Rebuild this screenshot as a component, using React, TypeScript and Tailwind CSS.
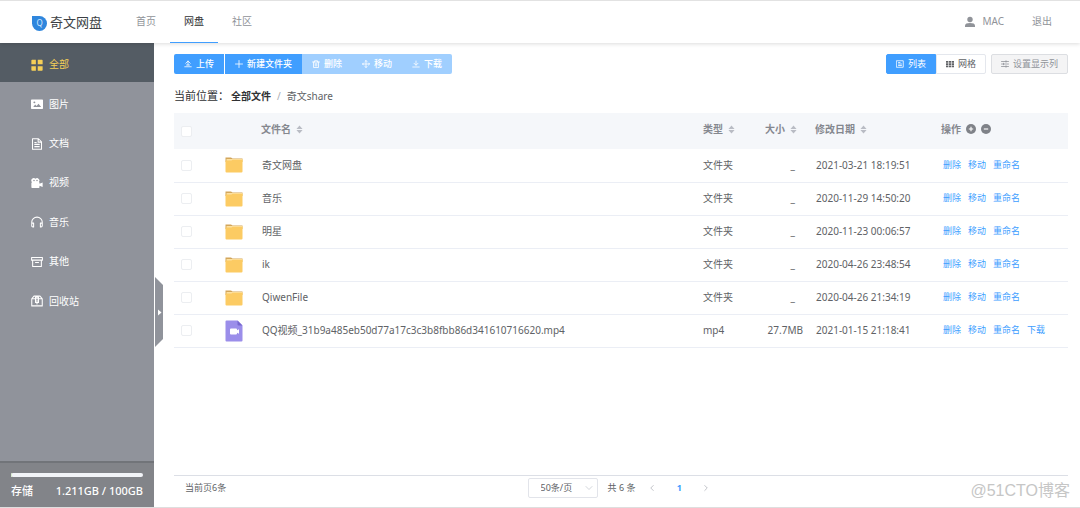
import { useState } from 'react';
import type { ReactNode } from 'react';
import clsx from 'clsx';

type FileRow = {
  name: string;
  kind: 'folder' | 'video';
  type: string;
  size: string;
  date: string;
};

const files: FileRow[] = [
  { name: '奇文网盘', kind: 'folder', type: '文件夹', size: '_', date: '2021-03-21 18:19:51' },
  { name: '音乐', kind: 'folder', type: '文件夹', size: '_', date: '2020-11-29 14:50:20' },
  { name: '明星', kind: 'folder', type: '文件夹', size: '_', date: '2020-11-23 00:06:57' },
  { name: 'ik', kind: 'folder', type: '文件夹', size: '_', date: '2020-04-26 23:48:54' },
  { name: 'QiwenFile', kind: 'folder', type: '文件夹', size: '_', date: '2020-04-26 21:34:19' },
  {
    name: 'QQ视频_31b9a485eb50d77a17c3c3b8fbb86d341610716620.mp4',
    kind: 'video',
    type: 'mp4',
    size: '27.7MB',
    date: '2021-01-15 21:18:41',
  },
];

/* Line icon on a 16 unit grid */
function Line({ className, width = 1.4, children }: { className: string; width?: number; children: ReactNode }) {
  return (
    <svg
      viewBox="0 0 16 16"
      className={clsx('shrink-0', className)}
      fill="none"
      stroke="currentColor"
      strokeWidth={width}
      strokeLinecap="round"
      strokeLinejoin="round"
      aria-hidden="true"
    >
      {children}
    </svg>
  );
}

const menu = [
  {
    label: '全部',
    icon: (
      <Line className="size-3" width={0}>
        <path
          fill="currentColor"
          d="M1.5 1h5v6h-6V2a1 1 0 0 1 1-1zM9 1h5.500a1 1 0 0 1 1 1v5H9zM.5 9.500h6v6h-5a1 1 0 0 1-1-1zM9 9.500h6.500v5a1 1 0 0 1-1 1H9z"
        />
      </Line>
    ),
  },
  {
    label: '图片',
    icon: (
      <Line className="size-3" width={0}>
        <path
          fill="currentColor"
          fillRule="evenodd"
          d="M1 2h14a1 1 0 0 1 1 1v10.500a1 1 0 0 1-1 1H1a1 1 0 0 1-1-1V3a1 1 0 0 1 1-1zM3 12h10.500l-3.500-4.500-2.500 3L5.500 8.500zM4.500 4.500a1.300 1.300 0 1 0 0 2.600 1.300 1.300 0 0 0 0-2.600z"
        />
      </Line>
    ),
  },
  {
    label: '文档',
    icon: (
      <Line className="size-3">
        <path d="M2 1h8l4 4v10H2zM9.500 1v4.500H14M5 6h2M5 8.500h6M5 11.500h6" />
      </Line>
    ),
  },
  {
    label: '视频',
    icon: (
      <Line className="size-3" width={0}>
        <path
          fill="currentColor"
          fillRule="evenodd"
          d="M.5 8a1 1 0 0 1 1-1A3 3 0 0 1 6 2.300 3.200 3.200 0 0 1 10.500 6.800c.5.100.8.500.8 1.200v1l4.200-1.800v6.100l-4.200-1.500v1.700a1 1 0 0 1-1 1H1.500a1 1 0 0 1-1-1zM4 3.800a1 1 0 1 0 0 2 1 1 0 0 0 0-2zM8 3.800a1 1 0 1 0 0 2 1 1 0 0 0 0-2z"
        />
      </Line>
    ),
  },
  {
    label: '音乐',
    icon: (
      <Line className="size-3">
        <path d="M1 11V8a7 6.500 0 0 1 14 0v3M1 9.500h2.500v5H2.500A1.500 1.500 0 0 1 1 13zM15 9.500h-2.500v5h1A1.500 1.500 0 0 0 15 13z" />
      </Line>
    ),
  },
  {
    label: '其他',
    icon: (
      <Line className="size-3">
        <path d="M.8 2h14.400v3.500H.8zM2.200 5.500h11.600V14H2.200zM6 8.700h4" />
      </Line>
    ),
  },
  {
    label: '回收站',
    icon: (
      <Line className="size-3">
        <path d="M1 5h14v9.500H1zM1 5l3-3.500h8L15 5M6 5V3h4v2M6 5v5h4V5M8 7v5" />
      </Line>
    ),
  },
];

const uploadIcon = (
  <Line className="size-2" width={1.6}>
    <path d="M8 10V2M3.500 6.500 8 2l4.500 4.500M1.500 13.500h13M5 10h6" />
  </Line>
);
const plusIcon = (
  <Line className="size-2" width={1.6}>
    <path d="M8 1v14M1 8h14" />
  </Line>
);
const trashIcon = (
  <Line className="size-2" width={1.6}>
    <path d="M1 4h14M5 4V1.500h6V4M3 4v11h10V4M6.500 7v5M9.500 7v5" />
  </Line>
);
const moveIcon = (
  <Line className="size-2" width={1.6}>
    <path d="M8 1v14M1 8h14M6 3l2-2 2 2M6 13l2 2 2-2M3 6 1 8l2 2M13 6l2 2-2 2" />
  </Line>
);
const downloadIcon = (
  <Line className="size-2" width={1.6}>
    <path d="M8 2v8M4 6.500 8 10.500l4-4M1.500 14h13" />
  </Line>
);

function ToolButton({ label, icon, disabled, className }: { label: string; icon: ReactNode; disabled?: boolean; className?: string }) {
  return (
    <button
      type="button"
      disabled={disabled}
      className={clsx(
        'flex h-5 items-center gap-1 px-[10px] text-[9px] font-medium text-white',
        disabled ? 'bg-[#a0cfff]' : 'bg-[#409eff]',
        className
      )}
    >
      {icon}
      {label}
    </button>
  );
}

function SortHeader({ label }: { label: string }) {
  return (
    <button type="button" className="flex items-center gap-[5px] font-bold">
      {label}
      <svg viewBox="0 0 8 10" className="h-[9px] w-[7px] text-[#b9bcc4]" fill="currentColor" aria-hidden="true">
        <path d="M4 .5 7.500 4.300h-7zM4 9.500.5 5.700h7z" />
      </svg>
    </button>
  );
}

function FileIcon({ kind }: { kind: FileRow['kind'] }) {
  if (kind === 'folder') {
    return (
      <svg viewBox="0 0 18 16" className="h-4 w-[18px]" aria-hidden="true">
        <path fill="#d3a65a" d="M.5.500h5.500l1.500 1h10V5H.5z" />
        <path fill="#fde0a0" d="M1.500 2h16v3h-16z" />
        <path fill="#fccb63" d="M.5 3.500h6l1-.8h10v11.800a1 1 0 0 1-1 1h-15a1 1 0 0 1-1-1z" />
      </svg>
    );
  }
  return (
    <svg viewBox="0 0 18 22" className="h-[22px] w-[18px]" aria-hidden="true">
      <path fill="#9b8eea" d="M1.500.5h11l5 5v15a1 1 0 0 1-1 1h-15a1 1 0 0 1-1-1v-19a1 1 0 0 1 1-1z" />
      <path fill="#7767cf" d="M12.500.5l5 5h-4a1 1 0 0 1-1-1z" />
      <path fill="#fff" d="M6 8.500h5a1 1 0 0 1 1 1v.7l2-1v4.600l-2-1v.7a1 1 0 0 1-1 1H6a1 1 0 0 1-1-1v-4a1 1 0 0 1 1-1z" />
    </svg>
  );
}

function Checkbox({ label }: { label: string }) {
  return (
    <input
      type="checkbox"
      aria-label={label}
      className="mx-auto block size-[11px] appearance-none rounded-xs border border-[#eceef1] bg-white checked:border-[#409eff] checked:bg-[#409eff]"
    />
  );
}

function Header() {
  const link = 'flex h-full items-center border-b px-[14px]';
  return (
    <header className="relative z-10 flex h-[43px] shrink-0 items-center border-t border-[#e2e2e2] bg-white pl-8 text-[#909399] shadow-[0_1px_4px_rgba(0,0,0,0.14)]">
      <a href="#" className="flex w-[90px] items-center gap-[3px] pt-[2px] whitespace-nowrap text-[13px] text-[#3c3f44]">
        <span className="flex size-[15px] items-center justify-center rounded-full rounded-tl-xs bg-[#2f86dd] text-[8px] text-[#d5e9ff]">
          Q
        </span>
        奇文网盘
      </a>
      <nav className="flex h-full">
        <a href="#" className={clsx(link, 'border-transparent')}>首页</a>
        <a href="#" className={clsx(link, 'border-[#409eff] text-[#303133]')}>网盘</a>
        <a href="#" className={clsx(link, 'border-transparent')}>社区</a>
      </nav>
      <div className="ml-auto flex h-full pr-[14px]">
        <a href="#" className={clsx(link, 'gap-[6px] border-transparent')}>
          <svg viewBox="0 0 12 12" className="size-3" fill="currentColor" aria-hidden="true">
            <circle cx="6" cy="3.500" r="2.700" />
            <path d="M1 11V9.500C1 7.800 3 7 6 7s5 .8 5 2.500V11z" />
          </svg>
          MAC
        </a>
        <a href="#" className={clsx(link, 'border-transparent')}>退出</a>
      </div>
    </header>
  );
}

function Sidebar() {
  return (
    <aside className="relative flex w-[154px] shrink-0 flex-col bg-[#90939b] text-white">
      <nav className="flex h-69 flex-col">
        {menu.map((item, i) => (
          <a
            key={item.label}
            href="#"
            className={clsx('flex flex-1 items-center gap-[6px] pt-1 pl-[31px]', i === 0 && 'bg-[#545c64] text-[#f5cf57]')}
          >
            {item.icon}
            {item.label}
          </a>
        ))}
      </nav>

      {/* Storage */}
      <div className="mt-auto h-[46px] border-t-2 border-[#717479] bg-[#828489] px-[11px] pt-[10px]">
        <div className="h-1 rounded-full bg-[#f2f4f8]">
          <div className="h-full w-[1%] rounded-full bg-[#d8ecd0]" />
        </div>
        <div className="flex items-center justify-between pt-[6px] text-[11px] leading-4 font-medium">
          <span>存储</span>
          <span>1.211GB / 100GB</span>
        </div>
      </div>

      {/* Collapse handle */}
      <button type="button" aria-label="收起" className="absolute top-[234px] left-full ml-px">
        <svg viewBox="0 0 8 70" className="h-[70px] w-2" aria-hidden="true">
          <path fill="#90939b" d="M0 0l8 8v54l-8 8z" />
          <path fill="#fff" d="M3 32.500l3.500 3-3.500 3z" />
        </svg>
      </button>
    </aside>
  );
}

function FileTable() {
  return (
    <table className="w-full table-fixed border-collapse text-left">
      <colgroup>
        <col className="w-[25px]" />
        <col className="w-[54px]" />
        <col />
        <col className="w-[62px]" />
        <col className="w-[50px]" />
        <col className="w-[126px]" />
        <col className="w-[135px]" />
      </colgroup>
      <thead>
        <tr className="h-9 bg-[#f5f7fa] text-[#85888f]">
          <th><Checkbox label="全选" /></th>
          <th />
          <th className="px-2 pb-1"><SortHeader label="文件名" /></th>
          <th className="px-2 pb-1"><SortHeader label="类型" /></th>
          <th className="pb-1 pl-2"><SortHeader label="大小" /></th>
          <th className="px-2 pb-1"><SortHeader label="修改日期" /></th>
          <th className="px-2 pb-1">
            <div className="flex items-center gap-[5px]">
              操作
              {['M8 4.500v7M4.500 8h7', 'M4.500 8h7'].map((d) => (
                <svg key={d} viewBox="0 0 16 16" className="size-[10px]" aria-hidden="true">
                  <circle cx="8" cy="8" r="8" fill="#7f8288" />
                  <path d={d} stroke="#fff" strokeWidth="1.800" />
                </svg>
              ))}
            </div>
          </th>
        </tr>
      </thead>
      <tbody>
        {files.map((file) => (
          <tr key={file.name} className="h-[33px] border-b border-[#ebeef5]">
            <td><Checkbox label={file.name} /></td>
            <td className="pl-[26px]"><FileIcon kind={file.kind} /></td>
            <td className="truncate pl-[9px]">{file.name}</td>
            <td className="pl-2">{file.type}</td>
            <td className="pr-1 text-right">
              <span className={clsx(file.size === '_' && 'pr-2')}>{file.size}</span>
            </td>
            <td className="pl-[9px] whitespace-nowrap">{file.date}</td>
            <td className="pb-[2px] pl-[10px]">
              <div className="flex gap-[7px] text-[9px] text-[#409eff]">
                <a href="#">删除</a>
                <a href="#">移动</a>
                <a href="#">重命名</a>
                {file.kind === 'video' && <a href="#">下载</a>}
              </div>
            </td>
          </tr>
        ))}
      </tbody>
    </table>
  );
}

function Footer() {
  return (
    <footer className="mt-auto grid h-8 grid-cols-[1fr_auto_1fr] items-start border-t border-[#dcdfe6] pt-[2px] text-[9px]">
      <span className="pl-[11px] leading-5">当前页6条</span>
      <div className="flex h-5 items-center">
        <div className="relative">
          <select
            aria-label="每页条数"
            className="block h-5 w-[70px] appearance-none rounded-xs border border-[#e2e4ea] bg-white pl-3"
          >
            <option>50条/页</option>
            <option>100条/页</option>
          </select>
          <Line className="pointer-events-none absolute top-[6px] right-[5px] size-2 text-[#c0c4cc]">
            <path d="M2 5l6 6 6-6" />
          </Line>
        </div>
        <span className="pl-[10px]">共 6 条</span>
        <button type="button" aria-label="上一页" className="ml-[13px] text-[#a8abb2]">
          <Line className="size-2"><path d="M10.500 3l-5 5 5 5" /></Line>
        </button>
        <button type="button" className="w-[46px] font-bold text-[#409eff]">1</button>
        <button type="button" aria-label="下一页" className="pr-1 text-[#a8abb2]">
          <Line className="size-2"><path d="M5.500 3l5 5-5 5" /></Line>
        </button>
      </div>
    </footer>
  );
}

export default function App() {
  const [view, setView] = useState('list');
  const viewButton = 'flex h-5 items-center gap-1 border px-[9px]';

  return (
    <div className="relative flex h-screen flex-col border-b border-[#dedede] bg-white font-['Noto_Sans','Noto_Sans_CJK_SC',sans-serif] text-[10px] text-[#606266]">
      <Header />
      <div className="flex min-h-0 flex-1">
        <Sidebar />
        <main className="flex min-w-0 flex-1 flex-col pt-[11px] pr-3 pl-5">
          {/* Toolbar */}
          <div className="flex justify-between">
            <div className="flex">
              <ToolButton label="上传" icon={uploadIcon} className="mr-px rounded-l-xs" />
              <ToolButton label="新建文件夹" icon={plusIcon} />
              <ToolButton label="删除" icon={trashIcon} disabled />
              <ToolButton label="移动" icon={moveIcon} disabled />
              <ToolButton label="下载" icon={downloadIcon} disabled className="rounded-r-xs" />
            </div>
            <div className="flex text-[9px]">
              <button
                type="button"
                onClick={() => setView('list')}
                className={clsx(viewButton, 'rounded-l-xs', view === 'list' ? 'border-[#409eff] bg-[#409eff] text-white' : 'border-[#e4e7ed]')}
              >
                <Line className="size-2" width={1.6}>
                  <path d="M1.500 1.500h13v13h-13zM5 5h3M5 8h6M5 11h6" />
                </Line>
                列表
              </button>
              <button
                type="button"
                onClick={() => setView('grid')}
                className={clsx(viewButton, 'rounded-r-xs', view === 'grid' ? 'border-[#409eff] bg-[#409eff] text-white' : 'border-[#e4e7ed]')}
              >
                <Line className="size-2" width={0}>
                  <path
                    fill="currentColor"
                    d="M0 2h4.500v3.300H0zM5.700 2h4.600v3.300H5.700zM11.500 2H16v3.300h-4.500zM0 6.500h4.500v3.300H0zM5.700 6.500h4.600v3.300H5.700zM11.500 6.500H16v3.300h-4.500zM0 11h4.500v3.300H0zM5.700 11h4.600v3.300H5.700zM11.500 11H16v3.300h-4.500z"
                  />
                </Line>
                网格
              </button>
              <button type="button" className="ml-[5px] flex h-5 items-center gap-1 rounded-xs border border-[#dcdee2] bg-[#f4f4f5] px-[9px] text-[#909399]">
                <Line className="size-2" width={1.6}>
                  <path d="M1 3h14M1 8h14M1 13h14M10 1.500v3M5 6.500v3M10 11.500v3" />
                </Line>
                设置显示列
              </button>
            </div>
          </div>

          {/* Breadcrumb */}
          <div className="flex h-[39px] items-center pt-[6px]">
            <span className="text-[11px] text-[#303133]">当前位置：</span>
            <a href="#" className="pl-[2px] font-bold text-[#303133]">全部文件</a>
            <span className="px-[6px] text-[#a8abb2]">/</span>
            <span>奇文share</span>
          </div>

          <FileTable />
          <Footer />
        </main>
      </div>

      <span className="absolute right-[10px] bottom-1 font-['Liberation_Sans','Noto_Sans_CJK_SC',sans-serif] text-[16px] leading-6 text-[#c6c6c6]">
        @51CTO博客
      </span>
    </div>
  );
}
